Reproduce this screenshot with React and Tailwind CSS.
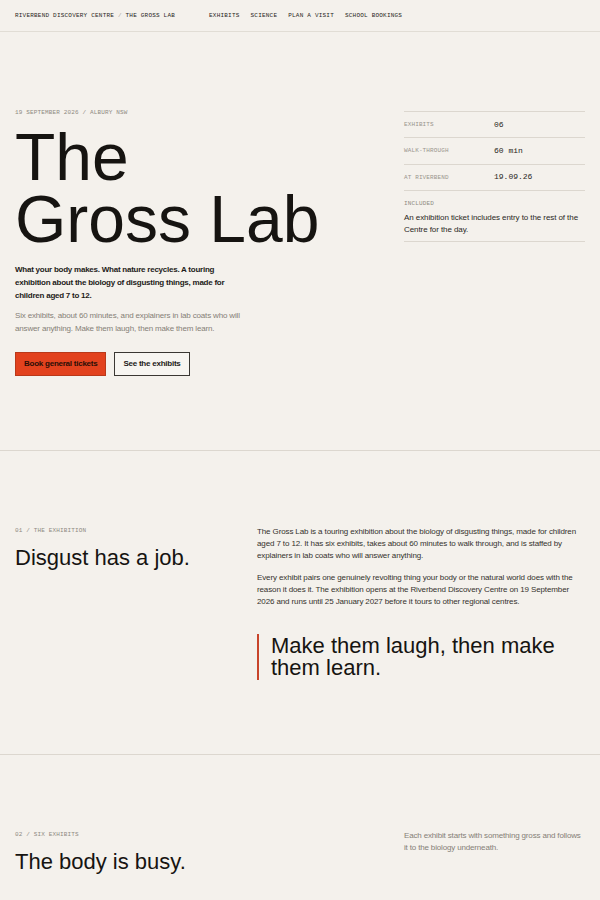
const MONO = "font-['Liberation_Mono','DejaVu_Sans_Mono',monospace]"
const HEAD = "font-['Liberation_Sans',Arial,sans-serif]"

const NAV_LINKS = ['Exhibits', 'Science', 'Plan a visit', 'School bookings']

const FACTS = [
  { label: 'Exhibits', value: '06' },
  { label: 'Walk-through', value: '60 min' },
  { label: 'At Riverbend', value: '19.09.26' },
]

function Eyebrow({ children }) {
  return (
    <p className={`${MONO} text-[6px] leading-[10px] uppercase tracking-[0.025em] text-[#8f8a82]`}>
      {children}
    </p>
  )
}

export default function App() {
  return (
    <div className="min-h-screen bg-[#f4f1ec] text-[#161411] font-['Liberation_Sans',Arial,sans-serif]">
      {/* Top bar */}
      <header className="h-[32px] flex items-center px-[15px] border-b border-[#e1ddd5]">
        <span className={`${MONO} text-[6px] uppercase tracking-[0.035em] text-[#2a2824]`}>
          Riverbend Discovery Centre <span className="text-[#a9a49c]">/</span> The Gross Lab
        </span>
        <nav className="ml-[34px] flex gap-[11px]">
          {NAV_LINKS.map(l => (
            <a key={l} className={`${MONO} text-[6px] uppercase tracking-[0.035em] text-[#2a2824]`}>{l}</a>
          ))}
        </nav>
      </header>

      {/* Hero */}
      <section className="px-[15px] pt-[76px] pb-[74px] border-b border-[#dcd7cf] flex">
        <div className="flex-1">
          <Eyebrow>19 September 2026 / Albury NSW</Eyebrow>
          <h1 className={`${HEAD} mt-[8px] text-[66px] leading-[62px] font-normal`}>
            The<br />Gross Lab
          </h1>
          <p className="mt-[13px] max-w-[222px] text-[8px] leading-[13px] font-bold tracking-[-0.03em] text-[#1d1b18]">
            What your body makes. What nature recycles. A touring exhibition about the biology of disgusting things, made for children aged 7 to 12.
          </p>
          <p className="mt-[8px] max-w-[235px] text-[8px] leading-[12.5px] tracking-[-0.02em] text-[#857f77]">
            Six exhibits, about 60 minutes, and explainers in lab coats who will answer anything. Make them laugh, then make them learn.
          </p>
          <div className="mt-[17px] flex gap-[8px]">
            <button className="h-[24px] px-[8px] bg-[#e2421e] border border-[#b9391a] text-[8px] font-bold tracking-[-0.03em] text-[#2b0e06]">
              Book general tickets
            </button>
            <button className="h-[24px] px-[8px] bg-[#f7f5f1] border border-[#3a3733] text-[8px] font-bold tracking-[-0.03em] text-[#1d1b18]">
              See the exhibits
            </button>
          </div>
        </div>

        <aside className="mt-[3px] self-start w-[181px] border-t border-[#dcd7cf]">
          {FACTS.map(f => (
            <div key={f.label} className="h-[26.3px] flex items-center border-b border-[#dcd7cf]">
              <span className={`${MONO} w-[90px] text-[6px] uppercase tracking-[0.02em] text-[#9a958d]`}>{f.label}</span>
              <span className={`${MONO} text-[8px] text-[#2a2824]`}>{f.value}</span>
            </div>
          ))}
          <div className="pt-[8px] pb-[5px] border-b border-[#dcd7cf]">
            <Eyebrow>Included</Eyebrow>
            <p className="mt-[3px] text-[8px] leading-[12px] tracking-[-0.01em] text-[#2a2824]">
              An exhibition ticket includes entry to the rest of the Centre for the day.
            </p>
          </div>
        </aside>
      </section>

      {/* 01 / The exhibition */}
      <section className="px-[15px] pt-[75px] pb-[74px] border-b border-[#dcd7cf] grid grid-cols-[227px_1fr] gap-[15px]">
        <div>
          <Eyebrow>01 / The exhibition</Eyebrow>
          <h2 className={`${HEAD} mt-[9px] text-[22px] leading-[26px] font-normal`}>Disgust has a job.</h2>
        </div>
        <div>
          <p className="text-[8px] leading-[12px] tracking-[-0.015em] text-[#34312c]">
            The Gross Lab is a touring exhibition about the biology of disgusting things, made for children aged 7 to 12. It has six exhibits, takes about 60 minutes to walk through, and is staffed by explainers in lab coats who will answer anything.
          </p>
          <p className="mt-[10px] text-[8px] leading-[12px] tracking-[-0.015em] text-[#34312c]">
            Every exhibit pairs one genuinely revolting thing your body or the natural world does with the reason it does it. The exhibition opens at the Riverbend Discovery Centre on 19 September 2026 and runs until 25 January 2027 before it tours to other regional centres.
          </p>
          <blockquote className={`${HEAD} mt-[26px] pl-[12px] border-l-2 border-[#c8442a] text-[22px] leading-[22px] py-[1px]`}>
            Make them laugh, then make them learn.
          </blockquote>
        </div>
      </section>

      {/* 02 / Six exhibits */}
      <section className="px-[15px] pt-[75px] pb-[60px] flex">
        <div className="flex-1">
          <Eyebrow>02 / Six exhibits</Eyebrow>
          <h2 className={`${HEAD} mt-[9px] text-[22px] leading-[26px] font-normal`}>The body is busy.</h2>
        </div>
        <p className="w-[181px] text-[8px] leading-[12px] tracking-[-0.02em] text-[#857f77]">
          Each exhibit starts with something gross and follows it to the biology underneath.
        </p>
      </section>
    </div>
  )
}
